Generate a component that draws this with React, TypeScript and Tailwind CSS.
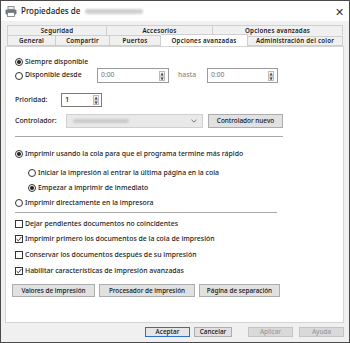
import React from 'react';

const font = { fontFamily: '"Noto Sans", "DejaVu Sans", sans-serif' };

function Radio({ checked }: { checked?: boolean }) {
  return (
    <span className="w-[8px] h-[8px] rounded-full border border-[#333] bg-white flex items-center justify-center shrink-0">
      {checked && <span className="w-[4px] h-[4px] rounded-full bg-[#222]" />}
    </span>
  );
}

function Check({ checked }: { checked?: boolean }) {
  return (
    <span className="w-[8px] h-[8px] border border-[#333] bg-white flex items-center justify-center shrink-0">
      {checked && (
        <svg width="6" height="6" viewBox="0 0 6 6">
          <path d="M0.6 3.2 L2.3 4.8 L5.4 1" fill="none" stroke="#222" strokeWidth="0.9" />
        </svg>
      )}
    </span>
  );
}

function Spin() {
  return (
    <span className="flex flex-col w-[6px] h-[10px] border border-[#bbb] bg-[#f4f4f4]">
      <span className="flex-1 flex items-center justify-center text-[4px] leading-none text-[#444]">▲</span>
      <span className="flex-1 flex items-center justify-center text-[4px] leading-none text-[#444] border-t border-[#ccc]">▼</span>
    </span>
  );
}

function TimeBox({ w }: { w: string }) {
  return (
    <div className={`${w} h-[15px] border border-[#9a9a9a] bg-white flex items-center justify-between pl-[3px] pr-[3px]`}>
      <span className="text-[6.8px] text-[#8a8a8a]">0:00</span>
      <Spin />
    </div>
  );
}

function Btn({ children, w, variant }: { children: React.ReactNode; w: string; variant?: 'default' | 'disabled' }) {
  const cls =
    variant === 'default'
      ? 'border-[#2a6fc9] bg-[#e5e5e5] text-[#111]'
      : variant === 'disabled'
      ? 'border-[#c4c4c4] bg-[#d9d9d9] text-[#9a9a9a]'
      : 'border-[#adadad] bg-[#e1e1e1] text-[#111]';
  return (
    <div className={`${w} h-full border ${cls} flex items-center justify-center text-[6.4px] font-medium whitespace-nowrap`}>
      {children}
    </div>
  );
}

export default function App() {
  return (
    <div style={font} className="w-[350px] h-[343px] bg-[#f0f0f0] border border-[#4a4a4a] flex flex-col overflow-hidden text-[#1a1a1a]">
      <div className="h-[20px] bg-white flex items-center pl-[4px] pr-[5px] shrink-0">
        <svg width="12" height="11" viewBox="0 0 12 11" className="mr-[4px]">
          <rect x="3" y="0.5" width="6" height="3" fill="#eee" stroke="#777" strokeWidth="0.8" />
          <rect x="0.5" y="3.5" width="11" height="5" rx="1" fill="#6f7a86" />
          <rect x="2.5" y="6.5" width="7" height="4" fill="#fff" stroke="#777" strokeWidth="0.8" />
        </svg>
        <span className="text-[8px] font-medium text-[#222]">Propiedades de</span>
        <span className="ml-[5px] w-[58px] h-[5px] bg-[#cfcfcf] rounded-[2px] blur-[1px]" />
        <span className="ml-auto text-[11px] leading-none text-[#333] font-light">✕</span>
      </div>

      <div className="mt-[4px] ml-[6px] w-[336px] flex flex-col text-[6.2px] font-semibold tracking-[0.2px] shrink-0">
        <div className="flex h-[10px]">
          <div className="w-[100px] border border-b-0 border-[#cfcfcf] bg-[#f0f0f0] flex items-center justify-center">Seguridad</div>
          <div className="w-[106px] border border-l-0 border-b-0 border-[#cfcfcf] bg-[#f0f0f0] flex items-center justify-center">Accesorios</div>
          <div className="w-[130px] border border-l-0 border-b-0 border-[#cfcfcf] bg-[#f0f0f0] flex items-center justify-center">Opciones avanzadas</div>
        </div>
        <div className="flex h-[11px] items-stretch">
          <div className="w-[49px] border border-[#cfcfcf] flex items-center justify-center">General</div>
          <div className="w-[54px] border border-l-0 border-[#cfcfcf] flex items-center justify-center">Compartir</div>
          <div className="w-[51px] border border-l-0 border-[#cfcfcf] flex items-center justify-center">Puertos</div>
          <div className="w-[87px] h-[12px] -mt-[1px] border border-b-0 border-l-0 border-[#cfcfcf] bg-white flex items-center justify-center z-10">Opciones avanzadas</div>
          <div className="w-[95px] mt-[1px] border border-l-0 border-[#cfcfcf] flex items-center justify-center">Administración del color</div>
        </div>
      </div>

      <div className="ml-[4px] w-[339px] h-[277px] bg-white border border-[#d4d4d4] flex flex-col pl-[9px] text-[6.9px] font-medium shrink-0">
        <div className="mt-[9px] h-[12px] flex items-center gap-[2px]">
          <Radio checked />
          <span>Siempre disponible</span>
        </div>
        <div className="h-[15px] flex items-center">
          <Radio />
          <span className="ml-[2px] w-[72px]">Disponible desde</span>
          <TimeBox w="w-[72px]" />
          <span className="ml-[9px] w-[29px] text-[#888]">hasta</span>
          <TimeBox w="w-[71px]" />
        </div>
        <div className="mt-[10px] h-[14px] flex items-center">
          <span className="w-[46px]">Prioridad:</span>
          <div className="w-[41px] h-[14px] border border-[#7a7a7a] bg-white flex items-center justify-between pl-[3px] pr-[2px]">
            <span className="text-[7.5px]">1</span>
            <Spin />
          </div>
        </div>
        <div className="mt-[7px] h-[14px] flex items-center">
          <span className="w-[51px]">Controlador:</span>
          <div className="w-[137px] h-[14px] border border-[#cfcfcf] bg-[#e9e9e9] flex items-center pl-[6px] pr-[5px]">
            <span className="w-[56px] h-[4px] bg-[#c9c9c9] rounded-[2px] blur-[1px]" />
            <svg width="6" height="4" viewBox="0 0 6 4" className="ml-auto">
              <path d="M0.5 0.8 L3 3.2 L5.5 0.8" fill="none" stroke="#555" strokeWidth="0.8" />
            </svg>
          </div>
          <div className="ml-[5px] w-[75px] h-[14px]">
            <Btn w="w-full">Controlador nuevo</Btn>
          </div>
        </div>
        <div className="mt-[8px] w-[268px] h-[1px] bg-[#a9a9a9]" />
        <div className="mt-[11px] h-[12px] flex items-center gap-[2px]">
          <Radio checked />
          <span>Imprimir usando la cola para que el programa termine más rápido</span>
        </div>
        <div className="mt-[7px] ml-[13px] h-[12px] flex items-center gap-[2px]">
          <Radio />
          <span>Iniciar la impresión al entrar la última página en la cola</span>
        </div>
        <div className="mt-[3px] ml-[13px] h-[12px] flex items-center gap-[2px]">
          <Radio checked />
          <span>Empezar a imprimir de inmediato</span>
        </div>
        <div className="mt-[3px] h-[12px] flex items-center gap-[2px]">
          <Radio />
          <span>Imprimir directamente en la impresora</span>
        </div>
        <div className="mt-[3px] w-[262px] h-[1px] bg-[#a9a9a9]" />
        <div className="mt-[5px] h-[12px] flex items-center gap-[2px]">
          <Check />
          <span>Dejar pendientes documentos no coincidentes</span>
        </div>
        <div className="mt-[3px] h-[12px] flex items-center gap-[2px]">
          <Check checked />
          <span>Imprimir primero los documentos de la cola de impresión</span>
        </div>
        <div className="mt-[4px] h-[12px] flex items-center gap-[2px]">
          <Check />
          <span>Conservar los documentos después de su impresión</span>
        </div>
        <div className="mt-[4px] h-[12px] flex items-center gap-[2px]">
          <Check checked />
          <span>Habilitar características de impresión avanzadas</span>
        </div>
        <div className="mt-[7px] -ml-[3px] h-[13px] flex gap-[4px]">
          <Btn w="w-[83px]">Valores de impresión</Btn>
          <Btn w="w-[96px]">Procesador de impresión</Btn>
          <Btn w="w-[81px]">Página de separación</Btn>
        </div>
      </div>

      <div className="mt-[4px] h-[10px] flex pl-[144px] shrink-0">
        <Btn w="w-[45px]" variant="default">Aceptar</Btn>
        <div className="ml-[4px]"><Btn w="w-[38px]">Cancelar</Btn></div>
        <div className="ml-[16px]"><Btn w="w-[45px]" variant="disabled">Aplicar</Btn></div>
        <div className="ml-[6px]"><Btn w="w-[45px]" variant="disabled">Ayuda</Btn></div>
      </div>
    </div>
  );
}
